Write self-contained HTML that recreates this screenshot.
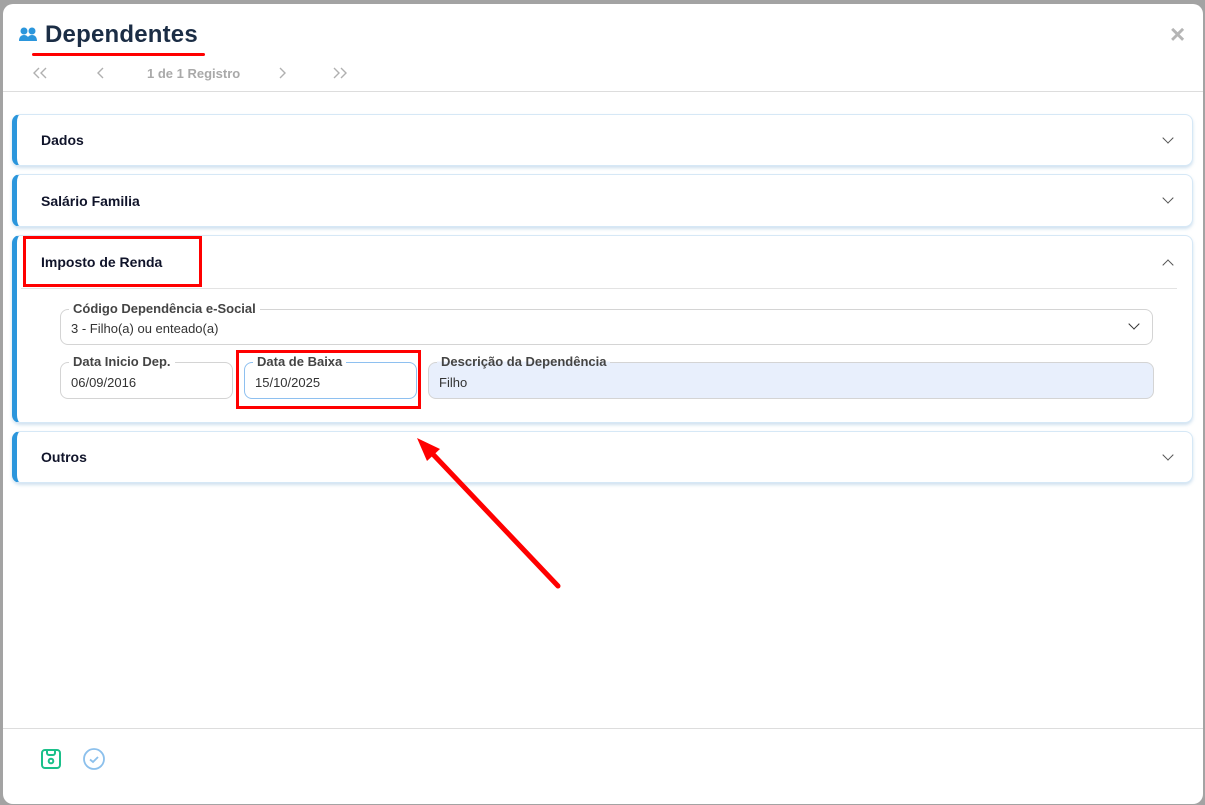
<!DOCTYPE html>
<html><head><meta charset="utf-8"><style>
*{box-sizing:border-box;margin:0;padding:0}
body{width:1205px;height:805px;overflow:hidden;background:#a3a3a3;font-family:"Liberation Sans",sans-serif;position:relative}
.modal{position:absolute;left:3px;top:4px;width:1200px;height:800px;background:#fff;border-radius:10px;overflow:hidden}
.abs{position:absolute}
.title{left:42px;top:17px;font-size:24px;font-weight:bold;color:#1b2d45;letter-spacing:0.2px}
.nav{top:62px;font-size:13px;color:#a9a9a9;font-weight:bold}
.panel{position:absolute;left:9px;width:1181px;background:#fff;border:1px solid #d6e8f6;border-left:5px solid #2b96dc;border-radius:8px;box-shadow:0 2px 3px rgba(120,170,210,.35)}
.ph{position:absolute;left:24px;font-size:14px;font-weight:bold;color:#10142a}
.chev{position:absolute;right:20px;width:8px;height:8px;border-right:1.8px solid #555;border-bottom:1.8px solid #555;transform:rotate(45deg)}
.field{position:absolute;border:1px solid #d4d4d4;border-radius:8px;background:#fff}
.lab{position:absolute;top:-9px;left:8px;background:#fff;padding:0 4px;font-size:13px;font-weight:bold;color:#444}
.val{position:absolute;left:10px;top:12px;font-size:13px;color:#333}
.red{position:absolute;border:3px solid #f00}
</style></head><body>
<div class="modal">
 <svg class="abs" style="left:15px;top:22px" width="20" height="16" viewBox="0 0 20 16"><circle cx="6" cy="5" r="3.5" fill="#2b96dc"/><circle cx="14" cy="5" r="3.5" fill="#2b96dc"/><path d="M1 15c0-4 2-6 5-6s5 2 5 6z M9 15c0-4 2-6 5-6s5 2 5 6z" fill="#2b96dc"/></svg>
 <div class="abs title">Dependentes</div>
 <div class="abs" style="left:29px;top:49px;width:173px;height:3px;background:#f00;border-radius:2px"></div>
 <svg class="abs" style="left:0;top:60px" width="360" height="20" fill="none" stroke="#b0b0b0" stroke-width="1.4">
  <path d="M36 4l-5 5 5 5M43 4l-5 5 5 5"/>
  <path d="M100 4l-5 5 5 5"/>
  <path d="M277 4l5 5-5 5"/>
  <path d="M331 4l5 5-5 5M338 4l5 5-5 5"/>
 </svg>
 <div class="abs nav" style="left:144px">1 de 1 Registro</div>
 <div class="abs" style="left:1167px;top:15px;font-size:26px;color:#b5b5b5;font-weight:bold">&times;</div>
 <div class="abs" style="left:0;top:87px;width:1200px;height:1px;background:#ddd"></div>

 <div class="panel" style="top:110px;height:52px"><div class="ph" style="top:17px">Dados</div><div class="chev" style="top:19px"></div></div>
 <div class="panel" style="top:170px;height:53px"><div class="ph" style="top:18px">Salário Familia</div><div class="chev" style="top:19px"></div></div>
 <div class="panel" style="top:231px;height:188px">
  <div class="ph" style="top:18px">Imposto de Renda</div>
  <div class="chev" style="top:25px;transform:rotate(-135deg)"></div>
  <div class="abs" style="left:4px;right:15px;top:52px;height:1px;background:#e3e3e3"></div>
  <div class="field" style="left:43px;top:73px;width:1093px;height:36px"><div class="lab">Código Dependência e-Social</div><div class="val" style="top:11px">3 - Filho(a) ou enteado(a)</div><div class="chev" style="right:14px;top:10px;border-color:#333"></div></div>
  <div class="field" style="left:43px;top:126px;width:173px;height:37px"><div class="lab">Data Inicio Dep.</div><div class="val">06/09/2016</div></div>
  <div class="field" style="left:227px;top:126px;width:173px;height:37px;border-color:#8ec0f0"><div class="lab">Data de Baixa</div><div class="val">15/10/2025</div></div>
  <div class="field" style="left:411px;top:126px;width:726px;height:37px;background:#e8effc"><div class="lab" style="background:linear-gradient(#fff 50%,#e8effc 50%)">Descrição da Dependência</div><div class="val">Filho</div></div>
 </div>
 <div class="panel" style="top:427px;height:52px"><div class="ph" style="top:17px">Outros</div><div class="chev" style="top:19px"></div></div>

 <div class="red" style="left:20px;top:232px;width:179px;height:51px"></div>
 <div class="red" style="left:233px;top:346px;width:185px;height:59px"></div>
 <svg class="abs" style="left:0;top:0" width="1200" height="800"><line x1="555" y1="582" x2="425" y2="445" stroke="#f00" stroke-width="5" stroke-linecap="round"/><polygon points="414,434 437,445 424,457" fill="#f00"/></svg>

 <div class="abs" style="left:0;top:724px;width:1200px;height:1px;background:#ddd"></div>
 <svg class="abs" style="left:37px;top:744px" width="22" height="22" viewBox="0 0 22 22"><rect x="2" y="2" width="18" height="18" rx="3" fill="none" stroke="#1bc08a" stroke-width="2"/><path d="M7 2v3a2 2 0 0 0 2 2h4a2 2 0 0 0 2-2V2" fill="none" stroke="#1bc08a" stroke-width="2"/><circle cx="11" cy="13" r="2.3" fill="none" stroke="#1bc08a" stroke-width="2"/></svg>
 <svg class="abs" style="left:79px;top:743px" width="24" height="24" viewBox="0 0 24 24"><circle cx="12" cy="12" r="10" fill="none" stroke="#8cc0ec" stroke-width="1.8"/><path d="M8 12.5l3 2.5 5-5" fill="none" stroke="#8cc0ec" stroke-width="1.8"/></svg>
</div>
</body></html>
